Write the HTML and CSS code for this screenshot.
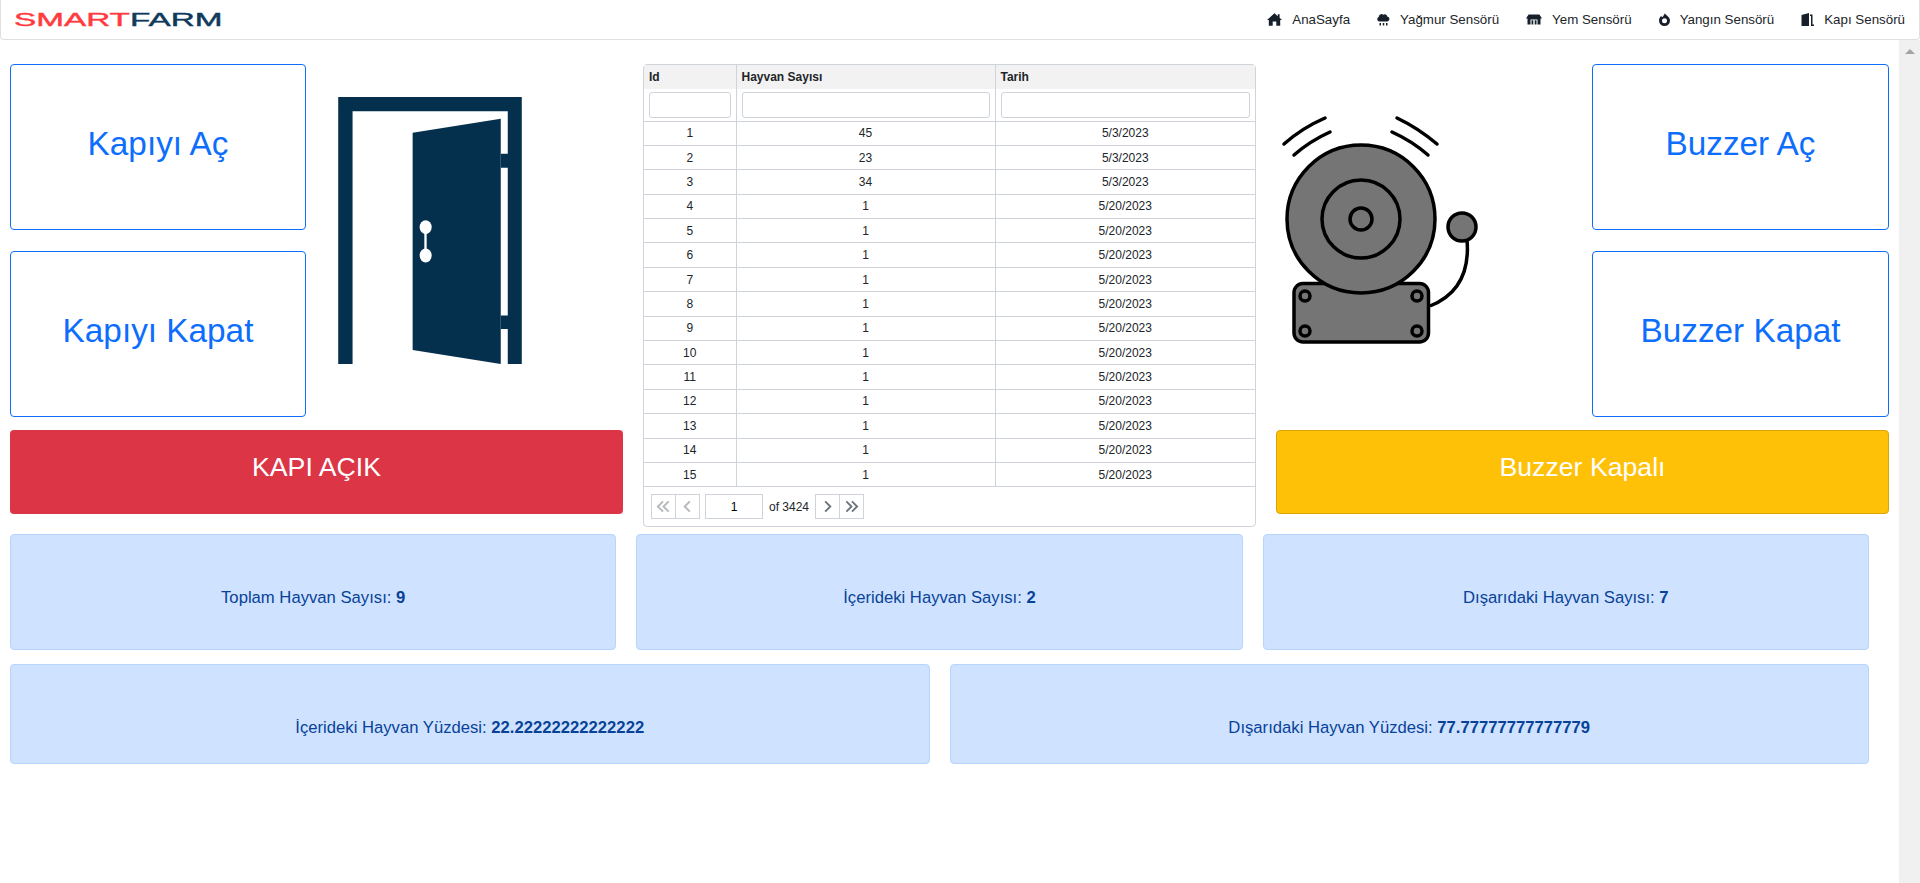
FILE: index.html
```html
<!DOCTYPE html>
<html lang="en">
<head>
  <meta charset="UTF-8">
  <title>Smart Farm</title>
  <link rel="stylesheet" href="styles.css">
</head>
<body>
  <!-- Navbar -->
  <nav class="navbar">
    <a class="logo" href="#"><span class="logo-text"><span class="logo-red">SMART</span><span class="logo-blue">FARM</span></span></a>
    <ul class="nav-links">
      <li><a href="#">
        <svg class="nav-icon icon-home" viewBox="0 0 15 13"><path d="M7.500 0.300 L10.800 3.200 L10.800 1.200 L12.600 1.200 L12.600 4.800 L15 7 L13.200 7 L13.200 12.700 L9.300 12.700 L9.300 8.500 L5.700 8.500 L5.700 12.700 L1.800 12.700 L1.800 7 L0 7 Z"/></svg>
        AnaSayfa</a></li>
      <li><a href="#">
        <svg class="nav-icon icon-rain" viewBox="0 0 13 13"><path d="M2.500 8.500 A2.400 2.400 0 0 1 1.700 3.900 A2.800 2.800 0 0 1 6.200 1.700 A2.500 2.500 0 0 1 10.200 3.400 A2.600 2.600 0 0 1 10.500 8.500 Z"/><path d="M2.500 10h1.500v2.500H2.500zM5.750 10h1.500v2.500h-1.500zM9 10h1.500v2.500H9z"/></svg>
        Yağmur Sensörü</a></li>
      <li><a href="#">
        <svg class="nav-icon icon-cow" viewBox="0 0 16 11"><path d="M0 4.500 L2.600 0.500 L13.400 0.500 L16 4.500 L14.500 4.500 L14.500 10.500 L11.500 10.500 L11.500 5.500 L4.500 5.500 L4.500 10.500 L1.500 10.500 L1.500 4.500 Z"/><path d="M5.500 6.300h1.800v4.200H5.500zM8.700 6.300h1.800v4.200H8.700z"/></svg>
        Yem Sensörü</a></li>
      <li><a href="#">
        <svg class="nav-icon icon-fire" viewBox="0 0 11 13"><path fill-rule="evenodd" d="M5.800 0.200 C6.200 1.800 11 3.500 11 7.500 A5.500 5.500 0 0 1 0 7.500 C0 5.500 1 4.200 2 3 L3.400 4.300 C4 3 5.200 1.800 5.800 0.200 Z M5.500 5.200 A2.500 2.500 0 1 0 5.500 10.200 A2.500 2.500 0 1 0 5.500 5.200 Z"/></svg>
        Yangın Sensörü</a></li>
      <li><a href="#">
        <svg class="nav-icon icon-door" viewBox="0 0 13 13"><path d="M0.500 13 L0.500 2 L8 0 L8 13 Z"/><path d="M9 1.500h2.500v10h1.500v1.500h-3V3H9z"/></svg>
        Kapı Sensörü</a></li>
    </ul>
  </nav>

  <div class="page">
    <main class="content">
      <div class="top-row">
        <!-- Kapi -->
        <section class="panel">
          <div class="controls">
            <div class="btn-stack btn-stack-left">
              <button class="big-btn">Kapıyı Aç</button>
              <button class="big-btn">Kapıyı Kapat</button>
            </div>
            <svg class="door-img" viewBox="55 50 550 800" width="184" height="267">
              <path fill="#05304d" d="M55 50H605V850H563V745H542V705H563V262H542V220H563V93H98V850H55Z"/>
              <path fill="#05304d" d="M278 157L542 115V850L278 808Z"/>
              <ellipse fill="#fff" cx="317" cy="440" rx="18" ry="21"/>
              <ellipse fill="#fff" cx="317" cy="525" rx="18" ry="21"/>
              <rect fill="#fff" x="313" y="450" width="7" height="70"/>
            </svg>
          </div>
          <div class="status status-red">KAPI AÇIK</div>
        </section>

        <!-- Tablo -->
        <section class="grid-box">
          <table class="data-table">
            <thead>
              <tr class="head-row"><th class="col-id">Id</th><th class="col-count">Hayvan Sayısı</th><th>Tarih</th></tr>
              <tr class="filter-row"><th><input type="text"></th><th><input type="text"></th><th><input type="text"></th></tr>
            </thead>
            <tbody>
              <tr><td>1</td><td>45</td><td>5/3/2023</td></tr>
              <tr><td>2</td><td>23</td><td>5/3/2023</td></tr>
              <tr><td>3</td><td>34</td><td>5/3/2023</td></tr>
              <tr><td>4</td><td>1</td><td>5/20/2023</td></tr>
              <tr><td>5</td><td>1</td><td>5/20/2023</td></tr>
              <tr><td>6</td><td>1</td><td>5/20/2023</td></tr>
              <tr><td>7</td><td>1</td><td>5/20/2023</td></tr>
              <tr><td>8</td><td>1</td><td>5/20/2023</td></tr>
              <tr><td>9</td><td>1</td><td>5/20/2023</td></tr>
              <tr><td>10</td><td>1</td><td>5/20/2023</td></tr>
              <tr><td>11</td><td>1</td><td>5/20/2023</td></tr>
              <tr><td>12</td><td>1</td><td>5/20/2023</td></tr>
              <tr><td>13</td><td>1</td><td>5/20/2023</td></tr>
              <tr><td>14</td><td>1</td><td>5/20/2023</td></tr>
              <tr><td>15</td><td>1</td><td>5/20/2023</td></tr>
            </tbody>
          </table>
          <div class="pager">
            <div class="pager-group">
              <button class="pager-btn pager-off"><svg viewBox="0 0 16 16"><path d="M7.500 2.500L2 8l5.500 5.500M13.500 2.500L8 8l5.500 5.500"/></svg></button>
              <button class="pager-btn pager-off"><svg viewBox="0 0 16 16"><path d="M10.500 2.500L5 8l5.500 5.500"/></svg></button>
            </div>
            <input class="pager-input" type="text" value="1">
            <span class="pager-total">of 3424</span>
            <div class="pager-group">
              <button class="pager-btn"><svg viewBox="0 0 16 16"><path d="M5.500 2.500L11 8l-5.500 5.500"/></svg></button>
              <button class="pager-btn"><svg viewBox="0 0 16 16"><path d="M2.500 2.500L8 8l-5.500 5.500M8.500 2.500L14 8l-5.500 5.500"/></svg></button>
            </div>
          </div>
        </section>

        <!-- Buzzer -->
        <section class="panel">
          <div class="controls controls-right">
            <svg class="bell-img" viewBox="16 0 224 260" width="224" height="260">
              <g fill="#757575" stroke="#000" stroke-width="3.500">
                <path fill="none" stroke-linecap="round" d="M24 44Q42 28 65 18M34 55Q50 41 70 32M177 44Q158 28 137 18M168 55Q152 41 132 32"/>
                <path fill="none" d="M207 140C210 175 195 196 170 206"/>
                <circle cx="202" cy="127" r="14"/>
                <rect x="34" y="183.500" width="134.500" height="58.500" rx="9"/>
                <circle cx="45" cy="196" r="5"/><circle cx="157" cy="196" r="5"/>
                <circle cx="45" cy="231" r="5"/><circle cx="157" cy="231" r="5"/>
                <circle cx="101" cy="119" r="74"/>
                <circle cx="101" cy="119" r="39"/>
                <circle cx="101" cy="119" r="11"/>
              </g>
            </svg>
            <div class="btn-stack">
              <button class="big-btn">Buzzer Aç</button>
              <button class="big-btn">Buzzer Kapat</button>
            </div>
          </div>
          <div class="status status-yellow">Buzzer Kapalı</div>
        </section>
      </div>

      <div class="info-row info-3">
        <div class="info-box">Toplam Hayvan Sayısı: <b>9</b></div>
        <div class="info-box">İçerideki Hayvan Sayısı: <b>2</b></div>
        <div class="info-box">Dışarıdaki Hayvan Sayısı: <b>7</b></div>
      </div>
      <div class="info-row info-2">
        <div class="info-box info-tall">İçerideki Hayvan Yüzdesi: <b>22.22222222222222</b></div>
        <div class="info-box info-tall">Dışarıdaki Hayvan Yüzdesi: <b>77.77777777777779</b></div>
      </div>
    </main>
    <div class="scrollbar"><span class="scroll-up"></span></div>
  </div>
</body>
</html>
```

FILE: styles.css
```css
* {
  box-sizing: border-box;
}
html, body {
  height: 100%;
}
body {
  margin: 0;
  display: flex;
  flex-direction: column;
  overflow: hidden;
  background-color: #fff;
  color: #212529;
  font-family: "Liberation Sans", Arial, sans-serif;
}

/* navbar */
.navbar {
  height: 40px;
  flex: none;
  display: flex;
  align-items: center;
  justify-content: space-between;
  background-color: #fff;
  border: 1px solid #dfdfdf;
  border-top: none;
  border-radius: 0 0 4px 4px;
  padding: 0 14px 0 13px;
}
.logo {
  text-decoration: none;
  display: block;
  height: 20px;
}
.logo-text {
  display: inline-block;
  font-size: 18px;
  line-height: 20px;
  -webkit-text-stroke: 0.4px currentColor;
  transform: scaleX(1.85);
  transform-origin: left center;
}
.logo-red {
  color: #ff3b3f;
}
.logo-blue {
  color: #103a5c;
}
.nav-links {
  display: flex;
  gap: 27px;
  list-style: none;
  margin: 0;
  padding: 0;
}
.nav-links a {
  display: flex;
  align-items: center;
  gap: 10px;
  color: #212529;
  font-size: 13.33px;
  text-decoration: none;
}
.nav-icon {
  height: 13px;
  fill: #17202a;
}
.icon-home {
  width: 15px;
}
.icon-rain {
  width: 13px;
}
.icon-cow {
  width: 16px;
  height: 11px;
}
.icon-fire {
  width: 11px;
}
.icon-door {
  width: 13px;
}

/* layout */
.page {
  flex: 1;
  display: flex;
  min-height: 0;
}
.content {
  flex: 1;
  padding: 24px 10px 0;
}
.scrollbar {
  width: 21px;
  flex: none;
  background-color: #f0f0f0;
  display: flex;
  justify-content: center;
  padding-top: 9px;
}
.scroll-up {
  width: 0;
  height: 0;
  border-left: 5px solid transparent;
  border-right: 5px solid transparent;
  border-bottom: 5px solid #a3a3a3;
}
.top-row {
  display: grid;
  grid-template-columns: 613px 613px 613px;
  gap: 20px;
}

/* kapi / buzzer */
.controls {
  display: flex;
  align-items: flex-start;
  gap: 32px;
  height: 366px;
}
.controls-right {
  justify-content: space-between;
  gap: 0;
}
.door-img {
  margin-top: 33px;
}
.bell-img {
  margin-top: 36px;
}
.btn-stack {
  display: flex;
  flex-direction: column;
  gap: 20.500px;
  width: 297px;
}
.btn-stack-left {
  width: 296px;
}
.big-btn {
  height: 166px;
  padding: 0 0 6px;
  background-color: #fff;
  border: 1px solid #0d6efd;
  border-radius: 4px;
  color: #0d6efd;
  font-family: inherit;
  font-size: 33.33px;
}
.status {
  height: 84px;
  display: flex;
  align-items: center;
  justify-content: center;
  padding-bottom: 9px;
  border-radius: 4px;
  color: #fff;
  font-size: 26.67px;
}
.status-red {
  background-color: #dc3545;
}
.status-yellow {
  background-color: #ffc107;
  border: 1px solid #d9a406;
}

/* tablo */
.grid-box {
  height: 463px;
  border: 1px solid #ced4da;
  border-radius: 4px;
}
.data-table {
  width: 100%;
  border-collapse: collapse;
  table-layout: fixed;
  font-size: 12px;
}
.data-table th {
  text-align: left;
  padding: 0 5px;
  border-right: 1px solid #ced4da;
}
.data-table th:last-child,
.data-table td:last-child {
  border-right: none;
}
.col-id {
  width: 92px;
}
.col-count {
  width: 259px;
}
.head-row {
  height: 24px;
  background-color: #f2f2f2;
}
.filter-row {
  height: 32px;
}
.filter-row input {
  display: block;
  width: 100%;
  height: 26px;
  border: 1px solid #ced4da;
  border-radius: 3px;
}
.data-table td {
  height: 24.400px;
  padding: 0;
  text-align: center;
  border-top: 1px solid #ced4da;
  border-right: 1px solid #ced4da;
}
.data-table tbody tr:last-child td {
  border-bottom: 1px solid #ced4da;
}
.pager {
  display: flex;
  align-items: center;
  padding: 7px 7px;
  font-size: 12px;
}
.pager-group {
  display: flex;
}
.pager-btn {
  width: 25px;
  height: 25px;
  padding: 4px;
  background-color: #fff;
  border: 1px solid #ced4da;
  border-radius: 0;
}
.pager-btn + .pager-btn {
  border-left: none;
  width: 24px;
}
.pager-btn svg {
  display: block;
  width: 100%;
  height: 100%;
  fill: none;
  stroke: #6c757d;
  stroke-width: 2;
}
.pager-off svg {
  stroke: #b5b8bb;
}
.pager-input {
  width: 58px;
  height: 25px;
  margin-left: 5px;
  border: 1px solid #ced4da;
  text-align: center;
  font-size: 12px;
  font-family: inherit;
}
.pager-total {
  width: 52px;
  padding-left: 6px;
}

/* bilgi kutulari */
.info-row {
  display: grid;
  gap: 20px;
  width: 1859px;
}
.info-3 {
  grid-template-columns: repeat(3, 1fr);
  margin-top: 7px;
}
.info-2 {
  grid-template-columns: repeat(2, 1fr);
  margin-top: 14px;
}
.info-box {
  height: 116px;
  padding-top: 53px;
  text-align: center;
  background-color: #cfe2ff;
  border: 1px solid #b6d4fe;
  border-radius: 4px;
  color: #084298;
  font-size: 16.670px;
}
.info-tall {
  height: 100px;
  padding-top: 53px;
}
```
